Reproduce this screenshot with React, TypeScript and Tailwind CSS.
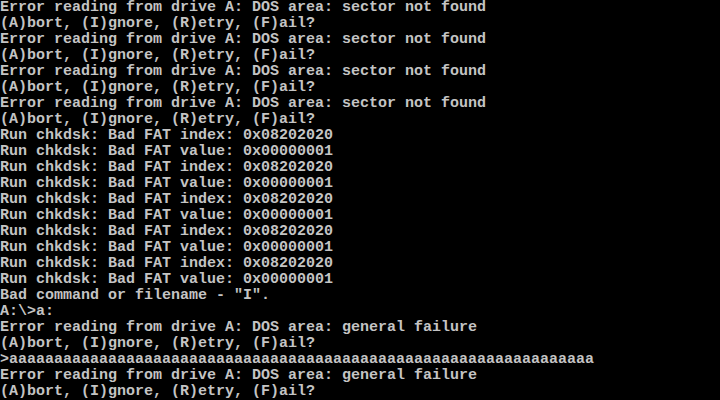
export default function App() {
  const err = (what: string) => `Error reading from drive A: DOS area: ${what}`
  const prompt = "(A)bort, (I)gnore, (R)etry, (F)ail?"
  const lines: string[] = []
  for (let i = 0; i < 4; i++) {
    lines.push(err("sector not found"))
    lines.push(prompt)
  }
  for (let i = 0; i < 5; i++) {
    lines.push("Run chkdsk: Bad FAT index: 0x08202020")
    lines.push("Run chkdsk: Bad FAT value: 0x00000001")
  }
  lines.push('Bad command or filename - "I".')
  lines.push("A:\\>a:")
  lines.push(err("general failure"))
  lines.push(prompt)
  lines.push(">" + "a".repeat(65))
  lines.push(err("general failure"))
  lines.push(prompt)

  return (
    <div className="w-[720px] h-[400px] overflow-hidden bg-black text-[#c4c4c4]">
      <div className="font-['Liberation_Mono',monospace] font-bold text-[15px] leading-[16px] whitespace-pre">
        {lines.map((l, i) => (
          <div key={i} className="h-4">{l}</div>
        ))}
      </div>
    </div>
  )
}
